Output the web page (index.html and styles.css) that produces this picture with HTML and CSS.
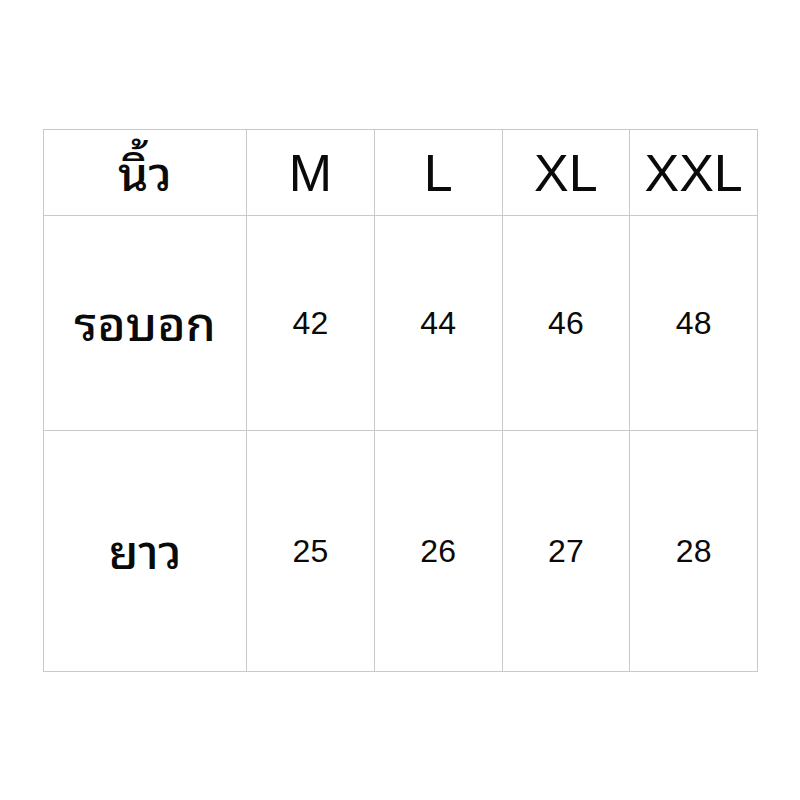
FILE: index.html
```html
<!DOCTYPE html>
<html lang="th">
<head>
<meta charset="utf-8">
<title>Size chart</title>
<link rel="stylesheet" href="styles.css">
</head>
<body>
<main class="page">
  <table class="chart">
    <colgroup>
      <col class="c-label">
      <col class="c-size">
      <col class="c-size">
      <col class="c-size">
      <col class="c-size">
    </colgroup>
    <tr class="r-head">
      <th class="thai">นิ้ว</th>
      <th class="size">M</th>
      <th class="size">L</th>
      <th class="size">XL</th>
      <th class="size">XXL</th>
    </tr>
    <tr class="r-chest">
      <th class="thai">รอบอก</th>
      <td>42</td>
      <td>44</td>
      <td>46</td>
      <td>48</td>
    </tr>
    <tr class="r-len">
      <th class="thai">ยาว</th>
      <td>25</td>
      <td>26</td>
      <td>27</td>
      <td>28</td>
    </tr>
  </table>
</main>
</body>
</html>
```

FILE: styles.css
```css
html, body {
  margin: 0;
  padding: 0;
  background: #ffffff;
}

.page {
  padding: 129px 0 0 43px;
}

.chart {
  border-collapse: collapse;
  table-layout: fixed;
  width: 714px;
  color: #0a0a0a;
  font-family: "Liberation Sans", Arial, sans-serif;
}

.c-label { width: 203px; }
.c-size { width: 127.75px; }

.chart th,
.chart td {
  border: 1px solid #c9c9c9;
  padding: 0;
  text-align: center;
  vertical-align: middle;
}

.r-head { height: 86px; }
.r-chest { height: 215px; }
.r-len { height: 241px; }

.size {
  font-weight: 400;
  font-size: 52px;
}

.chart .thai {
  font-family: "Noto Sans Thai Looped", "Noto Sans Thai", "Noto Sans", "DejaVu Sans", sans-serif;
  font-weight: 500;
  font-size: 48px;
  padding-bottom: 7px;
}

.chart td {
  font-size: 32px;
  font-weight: 400;
}
```
